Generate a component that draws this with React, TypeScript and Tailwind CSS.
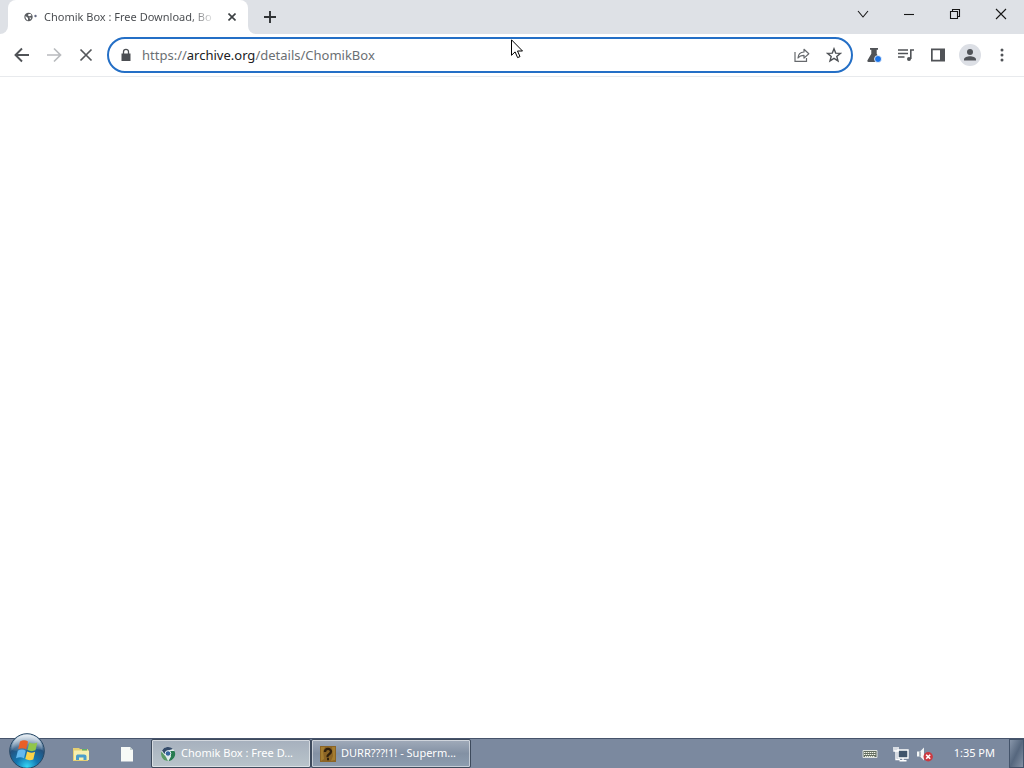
import type { ReactNode } from "react";

const IconButton = ({ label, children }: { label: string; children: ReactNode }) => (
  <button aria-label={label} className="flex h-8 w-8 shrink-0 items-center justify-center">
    {children}
  </button>
);

const WindowButton = ({ label, d }: { label: string; d: string }) => (
  <button aria-label={label} className="flex h-7 w-[46px] items-center justify-center">
    <svg className="h-3 w-3" viewBox="0 0 12 12" fill="none" stroke="#161616" strokeWidth="1.1">
      <path d={d} />
    </svg>
  </button>
);

const TabStrip = () => (
  <header className="flex h-[34px] shrink-0 items-start bg-[#dee1e6]">
    <div className="h-full w-2 shrink-0 bg-white">
      <div className="h-full rounded-br-lg bg-[#dee1e6]" />
    </div>
    <div className="flex h-full w-60 shrink-0 items-center rounded-t-lg bg-white pr-2 pl-4">
      <svg className="h-4 w-4 shrink-0" viewBox="0 0 16 16">
        <circle cx="4.5" cy="8" r="4.2" fill="#5b5e62" />
        <path d="M1.5 7 4 9v2.500C2.200 11 1.300 9 1.500 7M4.500 5h2.200l.8 1.500-2.200.7-1.300-.8M5.300 8.500l2 .3-1 1.700" fill="#fff" />
        <circle cx="11.500" cy="7" r="1.200" fill="#666b83" />
      </svg>
      <span className="ml-1 flex-1 bg-linear-to-r from-[#45484c] from-85% to-transparent bg-clip-text text-[11px] whitespace-nowrap text-transparent">
        Chomik Box : Free Download, Bo
      </span>
      <button aria-label="Close tab" className="ml-2 flex h-4 w-4 shrink-0 items-center justify-center">
        <svg className="h-2 w-2" viewBox="0 0 8 8" stroke="#3c4043" strokeWidth="1.6">
          <path d="m.5.5 7 7M7.500.5l-7 7" />
        </svg>
      </button>
    </div>
    <div className="h-full w-2 shrink-0 bg-white">
      <div className="h-full rounded-bl-lg bg-[#dee1e6]" />
    </div>
    <button aria-label="New tab" className="flex h-[34px] w-7 items-center justify-center">
      <svg className="h-3 w-3" viewBox="0 0 12 12" stroke="#2f3235" strokeWidth="1.9">
        <path d="M6 0v12M0 6h12" />
      </svg>
    </button>
    <div className="ml-auto flex">
      <WindowButton label="Search tabs" d="m1 3 5 6 5-6" />
      <WindowButton label="Minimize" d="M1 6.500h10" />
      <WindowButton label="Restore" d="M1.500 3.500h7v7h-7zM3.500 3.500v-2h7v7h-2" />
      <WindowButton label="Close" d="m1 1 10 10M11 1 1 11" />
    </div>
  </header>
);

const AddressBar = () => (
  <div className="mx-[5px] flex h-9 flex-1 items-center rounded-full border-2 border-[#246fc6] bg-white pr-px">
    <svg className="ml-[9px] h-4 w-4 shrink-0" viewBox="0 0 16 16">
      <path d="M3.500 6.500h9V14h-9z" fill="#4c4f53" />
      <path d="M5.500 7V4.800a2.500 2.500 0 0 1 5 0V7" fill="none" stroke="#4c4f53" strokeWidth="1.3" />
    </svg>
    <div className="relative ml-2 flex-1">
      <input
        aria-label="Address"
        defaultValue="https://archive.org/details/ChomikBox"
        className="block w-full bg-transparent text-[13px] leading-5 text-transparent outline-none"
      />
      {/* host name is darker than the rest of the address */}
      <div aria-hidden="true" className="pointer-events-none absolute inset-0 text-[13px] leading-5 whitespace-nowrap text-[#6b6f73]">
        https://<span className="text-[#202124]">archive.org</span>/details/ChomikBox
      </div>
    </div>
    <IconButton label="Share">
      <svg className="h-4 w-4" viewBox="0 0 16 16" fill="none" stroke="#66696d" strokeWidth="1.2">
        <path d="M1 5v9.300h11.500V11" />
        <path d="M4 11c.2-3.800 2.200-5.800 6-6V2.300l4.800 4.400-4.800 4.400V8.300C7.300 8.300 5.500 9 4 11Z" strokeLinejoin="round" />
      </svg>
    </IconButton>
    <IconButton label="Bookmark this page">
      <svg className="h-4 w-4" viewBox="0 0 16 16" fill="none" stroke="#4f5256" strokeWidth="1.4">
        <path d="m8 1.800 1.700 4.300 4.700.3-3.600 3 1.200 4.500-4-2.500-4 2.500 1.200-4.500-3.600-3 4.700-.3z" />
      </svg>
    </IconButton>
  </div>
);

const Toolbar = () => (
  <nav className="flex h-[43px] shrink-0 items-center border-b border-[#e8eaed] bg-white px-1.5">
    <IconButton label="Back">
      <svg className="h-4 w-4" viewBox="0 0 16 16" fill="none" stroke="#505357" strokeWidth="1.9">
        <path d="M15 8H2M8 1.500 1.500 8 8 14.500" />
      </svg>
    </IconButton>
    <IconButton label="Forward">
      <svg className="h-4 w-4" viewBox="0 0 16 16" fill="none" stroke="#b9bbbe" strokeWidth="1.7">
        <path d="M1 8h13M8 1.500 14.500 8 8 14.500" />
      </svg>
    </IconButton>
    <IconButton label="Stop">
      <svg className="h-4 w-4" viewBox="0 0 16 16" stroke="#54575b" strokeWidth="1.7">
        <path d="m2.500 2.500 11 11M13.500 2.500l-11 11" />
      </svg>
    </IconButton>
    <AddressBar />
    <IconButton label="Experiments">
      <svg className="h-4 w-4" viewBox="0 0 16 16">
        <path d="M4 1h8v1.700h-1.300v4l3.800 6.600c.5 1-.1 1.700-1 1.700h-11c-.9 0-1.500-.7-1-1.700l3.800-6.600v-4H4z" fill="#505357" />
        <circle cx="12" cy="12" r="3.500" fill="#1a73e8" stroke="#fff" strokeWidth=".8" />
      </svg>
    </IconButton>
    <IconButton label="Media controls">
      <svg className="h-4 w-4" viewBox="0 0 16 16" fill="none" stroke="#505357" strokeWidth="1.6">
        <path d="M0 3h10M0 6.500h10M0 10h6.500M12.800 12V3H16" />
        <circle cx="11" cy="12" r="2" fill="#505357" stroke="none" />
      </svg>
    </IconButton>
    <IconButton label="Side panel">
      <svg className="h-4 w-4" viewBox="0 0 16 16">
        <path d="M1 1.500h14v13H1zm1.700 1.700v9.600H10V3.200z" fill="#505357" fillRule="evenodd" />
      </svg>
    </IconButton>
    <IconButton label="Profile">
      <svg className="h-[22px] w-[22px]" viewBox="0 0 22 22">
        <circle cx="11" cy="11" r="11" fill="#dcdfe5" />
        <circle cx="11" cy="8" r="3" fill="#505358" />
        <path d="M5 16.500v-1.200c0-2 3.500-3.100 6-3.100s6 1.100 6 3.100v1.200z" fill="#505358" />
      </svg>
    </IconButton>
    <IconButton label="Menu">
      <svg className="h-4 w-4" viewBox="0 0 16 16" fill="#505357">
        <circle cx="8" cy="3" r="1.500" />
        <circle cx="8" cy="8" r="1.500" />
        <circle cx="8" cy="13" r="1.500" />
      </svg>
    </IconButton>
  </nav>
);

const StartOrb = () => (
  <svg className="h-9 w-9" viewBox="0 0 36 36">
    <defs>
      <radialGradient id="orb" cx=".5" cy=".95" r=".9">
        <stop offset="0" stopColor="#35d6f5" />
        <stop offset=".35" stopColor="#1378b2" />
        <stop offset=".7" stopColor="#24527e" />
        <stop offset="1" stopColor="#b7cadb" />
      </radialGradient>
      <linearGradient id="shine" x1="0" y1="0" x2="0" y2="1">
        <stop offset="0" stopColor="#fff" stopOpacity=".65" />
        <stop offset="1" stopColor="#fff" stopOpacity=".1" />
      </linearGradient>
    </defs>
    <circle cx="18" cy="18" r="17.300" fill="url(#orb)" stroke="#264764" />
    <path d="M2.500 17A15.500 15.500 0 0 1 33.500 17C25 14 13 20 2.500 17Z" fill="url(#shine)" />
    <path d="M11 8.500c2.900-1.600 5.500-1.500 8 0l-1.800 7.700c-2.500-1.400-5.200-1.400-8 0z" fill="#e95f28" />
    <path d="M20.300 9.500c2.700 1.400 5.200 1.300 8 .1l-1.800 7.700c-2.700 1.200-5.300 1.100-8-.3z" fill="#91c64b" />
    <path d="M8.800 17.700c2.800-1.500 5.400-1.400 8 0L15 25.200c-2.500-1.400-5.200-1.400-8 0z" fill="#65b9ee" />
    <path d="M18.100 18.600c2.700 1.400 5.300 1.400 8 .2l-1.800 7.600c-2.700 1.200-5.300 1.100-8-.3z" fill="#fbd348" />
  </svg>
);

const TaskButton = ({ title, active, children }: { title: string; active?: boolean; children: ReactNode }) => (
  <button
    className={`flex h-[29px] w-40 items-center gap-[5px] rounded-xs border border-[#3d4a5c] pl-2 text-[11px] text-white inset-ring inset-ring-white/50 ${
      active ? "bg-linear-to-b from-[#a6b0bd] to-[#b9c4cb]" : "bg-linear-to-b from-[#a1abba] via-[#8391a4] to-[#8d9daf]"
    }`}
  >
    {children}
    <span className="whitespace-nowrap">{title}</span>
  </button>
);

const Taskbar = () => (
  <footer className="flex h-[30px] shrink-0 items-center border-t border-[#46536b] bg-[#7b899f]">
    <button aria-label="Start" className="relative -mt-1.5 ml-[9px] flex shrink-0">
      <StartOrb />
    </button>
    <button aria-label="File explorer" className="ml-5 flex h-7 w-8 items-center justify-center">
      <svg className="h-4 w-4" viewBox="0 0 16 16">
        <path d="M0 2h6l1 1h8v12H0z" fill="#e5cf72" />
        <path d="M1 4.500h15V14H1z" fill="#f8efae" />
        <path d="M9 3h5v1.500H9z" fill="#5fae6b" />
        <path d="M3 14v-3.500C3 9 4 8.500 5 8.500h6c1.500 0 2.500.8 2.500 2V14h-3v-2.500H6V14z" fill="#4b9ecb" />
      </svg>
    </button>
    <button aria-label="Document" className="ml-3.5 flex h-7 w-8 items-center justify-center">
      <svg className="h-4 w-4" viewBox="0 0 16 16">
        <path d="M2 1h9l3 3v11.500H2z" fill="#f7faf7" />
        <path d="M11 1v3h3z" fill="#c3d0cf" />
      </svg>
    </button>
    <div className="ml-2 flex">
      <TaskButton title="Chomik Box : Free D..." active>
        <svg className="h-4 w-4 shrink-0" viewBox="0 0 16 16">
          <circle cx="8" cy="8" r="7" fill="#e3edeb" />
          <path d="M2 4.500A7 7 0 0 1 13 3L8 4.500 4.500 8z" fill="#344b6a" />
          <path d="M1.500 5.500 6 11l2 4A7 7 0 0 1 1.500 5.500" fill="#5a9a68" />
          <path d="M10 5h4.500a7 7 0 0 1-6 10l2.500-4.500z" fill="#287b50" />
          <circle cx="8" cy="7.500" r="2.800" fill="#35669e" stroke="#e8f0f4" />
        </svg>
      </TaskButton>
      <TaskButton title="DURR???!1! - Superm...">
        <svg className="h-4 w-4 shrink-0" viewBox="0 0 16 16">
          <path d="M0 0h16v16H0z" fill="#8b6425" />
          <path d="M1 1h4l-2 4 1 8-3 2zM12 1h3v13l-4 1 2-5z" fill="#a57d30" />
          <path d="M5 6c0-4 6-4 6-.5C11 8.500 7 8 7.500 11M7 13h2" fill="none" stroke="#30200d" strokeWidth="2.300" />
        </svg>
      </TaskButton>
    </div>
    <div className="ml-auto flex h-full items-center">
      <button aria-label="Keyboard" className="flex w-4 justify-center">
        <svg className="h-4 w-4" viewBox="0 0 16 16">
          <path d="M1 4.500h14v7H1z" fill="#626d60" stroke="#dce1de" />
          <path d="M2 6.500h12M2 8.500h12M3 10.500h10" stroke="#f4f5e9" strokeDasharray="1.400 .6" />
        </svg>
      </button>
      <button aria-label="Network" className="ml-[15px] flex w-4 justify-center">
        <svg className="h-4 w-4" viewBox="0 0 16 16">
          <path d="M5 4h10v8H5z" fill="#41556b" stroke="#fff" strokeWidth="1.400" />
          <path d="M10 12v2.500M6.500 14.700h7M1 1v4h4V1M3 1v12.500h4" fill="none" stroke="#fff" strokeWidth="1.400" />
        </svg>
      </button>
      <button aria-label="Volume muted" className="ml-2 flex w-4 justify-center">
        <svg className="h-4 w-4" viewBox="0 0 16 16">
          <path d="M0 5.500h3l4-4v13l-4-4H0z" fill="#f4f7f7" />
          <path d="M3 5.500v5" stroke="#607080" />
          <circle cx="11.200" cy="10.700" r="4.700" fill="#cc3940" />
          <path d="m9.200 8.700 4 4M13.200 8.700l-4 4" stroke="#fff" strokeWidth="1.600" />
        </svg>
      </button>
      <time className="mr-3.5 ml-[21px] text-[11px] text-white">1:35 PM</time>
      <button aria-label="Show desktop" className="h-full w-[15px] border border-[#43536a] bg-linear-to-br from-[#8896aa] via-[#56677e] to-[#8592a5]" />
    </div>
  </footer>
);

export default function App() {
  return (
    <div className="flex h-screen flex-col overflow-hidden bg-white font-['Noto_Sans','Open_Sans',sans-serif]">
      <TabStrip />
      <Toolbar />
      <main className="flex-1 bg-white" />
      <Taskbar />
      {/* mouse pointer */}
      <svg className="pointer-events-none absolute top-[39px] left-[511px] h-5 w-3" viewBox="0 0 12 20">
        <path d="M.5.8v15.500l3.600-3.400 2.500 5.700 2.400-1-2.500-5.600h5z" fill="#fff" stroke="#000" />
      </svg>
    </div>
  );
}
